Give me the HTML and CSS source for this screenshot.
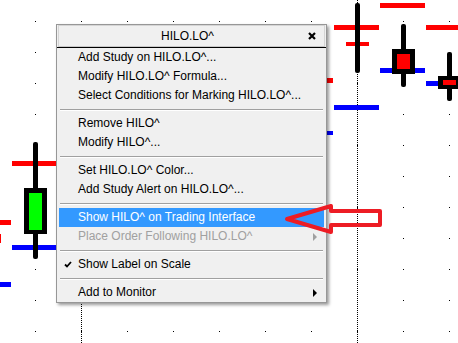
FILE: index.html
```html
<!DOCTYPE html>
<html lang="en">
<head>
<meta charset="utf-8">
<title>HILO.LO^ context menu</title>
<link rel="stylesheet" href="styles.css">
</head>
<body>
<div id="chart">
<svg class="plot" width="458" height="343" viewBox="0 0 458 343">
    <defs>
        <pattern id="grid" x="35" y="21" width="46" height="31" patternUnits="userSpaceOnUse">
            <rect x="0" y="0" width="1" height="1" fill="#000"/>
        </pattern>
    </defs>
    <rect x="0" y="0" width="458" height="343" fill="url(#grid)"/>
    <line x1="357.5" y1="0" x2="357.5" y2="343" stroke="#000" stroke-dasharray="1 1"/>
    <line x1="81.5" y1="200" x2="81.5" y2="343" stroke="#000" stroke-dasharray="1 1"/>

    <!-- left candle -->
    <rect x="12" y="161" width="50" height="5" fill="#f00"/>
    <rect x="12" y="245" width="50" height="5" fill="#00f"/>
    <rect x="33" y="142" width="5" height="117" rx="2" fill="#000"/>
    <rect x="24" y="188" width="23" height="46" fill="#000"/>
    <rect x="29" y="193" width="13" height="37" fill="#0f0"/>
    <rect x="0" y="220" width="11" height="5" fill="#f00"/>
    <rect x="0" y="234" width="1" height="9" fill="#f00"/>
    <rect x="0" y="282" width="11" height="5" fill="#00f"/>

    <!-- right candles -->
    <rect x="300" y="78" width="33" height="5" fill="#f00"/>
    <rect x="300" y="131" width="33" height="4" fill="#00f"/>
    <rect x="334" y="25" width="45" height="5" fill="#f00"/>
    <rect x="346" y="42" width="23" height="4" fill="#f00"/>
    <rect x="334" y="105" width="45" height="5" fill="#00f"/>
    <rect x="355" y="3" width="5" height="70" rx="2" fill="#000"/>

    <rect x="380" y="3" width="45" height="5" fill="#f00"/>
    <rect x="380" y="68" width="45" height="5" fill="#00f"/>
    <rect x="401" y="24" width="5" height="63" rx="2" fill="#000"/>
    <rect x="392" y="49" width="23" height="25" fill="#000"/>
    <rect x="397" y="54" width="13" height="15" fill="#f00"/>

    <rect x="426" y="25" width="32" height="5" fill="#f00"/>
    <rect x="426" y="81" width="15" height="5" fill="#00f"/>
    <rect x="447" y="52" width="5" height="49" rx="2" fill="#000"/>
    <rect x="438" y="76" width="23" height="13" fill="#000"/>
    <rect x="443" y="80" width="13" height="5" fill="#f00"/>
</svg>

<div class="menu">
    <div class="title">
        <div class="title-box">
            <span class="title-text">HILO.LO^</span>
            <span class="close"><svg width="8" height="8" viewBox="0 0 8 8"><path d="M1 1 L7 7 M7 1 L1 7" stroke="#000" stroke-width="2.2"/></svg></span>
        </div>
    </div>
    <ul class="items">
        <li>Add Study on HILO.LO^...</li>
        <li>Modify HILO.LO^ Formula...</li>
        <li>Select Conditions for Marking HILO.LO^...</li>
        <li class="sep"></li>
        <li>Remove HILO^</li>
        <li>Modify HILO^...</li>
        <li class="sep"></li>
        <li>Set HILO.LO^ Color...</li>
        <li>Add Study Alert on HILO.LO^...</li>
        <li class="sep"></li>
        <li class="active">Show HILO^ on Trading Interface</li>
        <li class="disabled sub">Place Order Following HILO.LO^</li>
        <li class="sep"></li>
        <li class="checked"><svg class="check" width="8" height="7" viewBox="0 0 8 7"><path d="M1 3.5 L3 5.5 L7 1" fill="none" stroke="#000" stroke-width="1.8"/></svg>Show Label on Scale</li>
        <li class="sep"></li>
        <li class="sub">Add to Monitor</li>
    </ul>
</div>

<svg class="arrow" width="458" height="343" viewBox="0 0 458 343">
    <polygon points="287,219 331,206 331,211 380,211 380,225 331,225 331,232" fill="none" stroke="#ed1c24" stroke-width="4" stroke-linejoin="round"/>
</svg>
</div>
</body>
</html>
```

FILE: styles.css
```css
body {
    margin: 0;
    background: #fff;
    font-family: "Liberation Sans", Arial, sans-serif;
    font-size: 12px;
}
#chart {
    position: relative;
    width: 458px;
    height: 343px;
    overflow: hidden;
    background: #fff;
}
.plot, .arrow {
    position: absolute;
    left: 0;
    top: 0;
}
.arrow {pointer-events: none;}

.menu {
    position: absolute;
    left: 56px;
    top: 24px;
    width: 269px;
    border: 1px solid #979797;
    background: #f0f0f0;
    box-shadow: 2px 2px 3px rgba(0,0,0,0.4);
}
.title {
    border-bottom: 1px solid #000;
    padding: 0 1px;
}
.title-box {
    height: 20px;
    border: 1px solid #d5d5d5;
    border-bottom-color: #c8c8c8;
    display: flex;
    align-items: center;
    padding-right: 8px;
}
.title-text {
    flex: 1;
    text-align: center;
    padding-left: 8px;
}
.close {
    display: flex;
    width: 8px;
}
.items {
    list-style: none;
    margin: 0;
    padding: 0 2px;
}
.items li {
    position: relative;
    height: 19px;
    line-height: 19px;
    padding-left: 19px;
    color: #000;
    white-space: nowrap;
}
.items li.sep {
    height: 5px;
    padding: 4px 0 0 0;
    margin: 0 1px;
}
.items li.sep::before {
    content: "";
    display: block;
    border-top: 1px solid #a0a0a0;
    border-bottom: 1px solid #fff;
}
.items li.active {
    background: #3399ff;
    color: #fff;
}
.items li.disabled {color: #a0a0a0;}
.items li.sub::after {
    content: "";
    position: absolute;
    right: 7px;
    top: 6px;
    border-left: 4px solid #000;
    border-top: 4px solid transparent;
    border-bottom: 4px solid transparent;
}
.items li.disabled.sub::after {border-left-color: #a0a0a0;}
.check {
    position: absolute;
    left: 5px;
    top: 6px;
}
```
